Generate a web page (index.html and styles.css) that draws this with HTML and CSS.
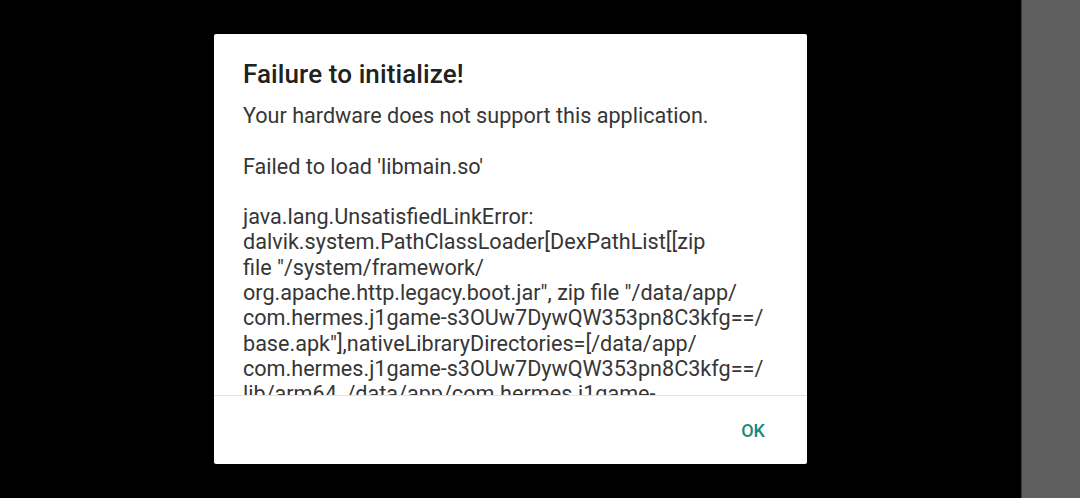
FILE: index.html
```html
<!DOCTYPE html>
<html>
<head>
<meta charset="utf-8">
<link rel="stylesheet" href="styles.css">
</head>
<body>
<div class="screen">
  <div class="dialog">
    <h1 class="title">Failure to initialize!</h1>
    <div class="content">
      <p class="para">Your hardware does not support this application.</p>
      <p class="para">Failed to load 'libmain.so'</p>
      <p class="para last">java.lang.UnsatisfiedLinkError:<br>dalvik.system.PathClassLoader[DexPathList[[zip<br>file "/system/framework/<br>org.apache.http.legacy.boot.jar", zip file "/data/app/<br>com.hermes.j1game-s3OUw7DywQW353pn8C3kfg==/<br>base.apk"],nativeLibraryDirectories=[/data/app/<br>com.hermes.j1game-s3OUw7DywQW353pn8C3kfg==/<br>lib/arm64, /data/app/com.hermes.j1game-</p>
    </div>
    <div class="actions">
      <button class="btn">OK</button>
    </div>
  </div>
</div>
<div class="sidebar"></div>
</body>
</html>
```
FILE: styles.css
```css
html, body {
  margin: 0;
  padding: 0;
  height: 100%;
}
body {
  background: #000;
  display: flex;
  font-family: Roboto, "Noto Sans", sans-serif;
  overflow: hidden;
}
.screen {
  width: 1021px;
  height: 498px;
  display: flex;
  align-items: center;
  justify-content: center;
}
.sidebar {
  flex: 1;
  background: #5f5f5f;
  border-left: 1px solid #3a3a3a;
}
.dialog {
  width: 593px;
  height: 430px;
  background: #fff;
  border-radius: 2px;
  display: flex;
  flex-direction: column;
  overflow: hidden;
}
.title {
  margin: 0;
  padding: 25px 29px 0;
  font-size: 26px;
  line-height: 31px;
  font-weight: 500;
  letter-spacing: 0.1px;
  color: #212121;
}
.content {
  flex: 1;
  min-height: 0;
  margin-top: 13px;
  padding: 0 29px;
  overflow: hidden;
  color: #363636;
  font-size: 21.6px;
  line-height: 25.3px;
}
.para {
  margin: 0 0 25.3px;
  white-space: nowrap;
}
.para.last {
  margin-bottom: 0;
}
.actions {
  flex: none;
  height: 68px;
  border-top: 1px solid #e3e3e3;
  display: flex;
  align-items: center;
  justify-content: flex-end;
  padding-right: 32px;
}
.btn {
  border: none;
  background: none;
  font-family: Roboto, sans-serif;
  font-weight: 500;
  font-size: 18px;
  color: #1a8a77;
  padding: 8px 10px;
  margin-top: 0;
}
```
